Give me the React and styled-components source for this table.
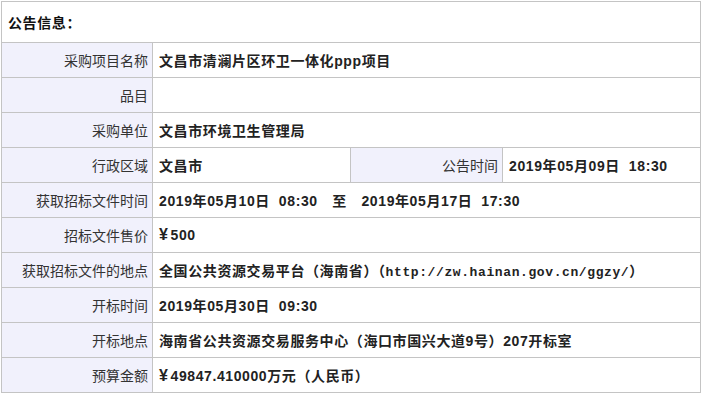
import React from 'react';
import styled, { createGlobalStyle } from 'styled-components';

const GlobalStyle = createGlobalStyle`
body {
    margin: 0;
    background: #fff;
    font-family: "Liberation Sans", "Noto Sans CJK SC", sans-serif;
    font-size: 14px;
    color: #333;
}
`

const Wrap = styled.div`
padding: 1px 0 0 1px;
`

const InfoTable = styled.table`
width: 700px;
border-collapse: collapse;
table-layout: fixed;
td, th {
    border: 1px solid #c4c4c4;
}
`

const TitleCell = styled.th`
height: 40px;
padding: 0 6px;
text-align: left;
font-weight: bold;
letter-spacing: 0.6px;
color: #111;
`

const Label = styled.td`
height: 34px;
padding: 0 4px 0 0;
text-align: right;
background: #f1f1fc;
color: #333;
white-space: nowrap;
`

const Value = styled.td`
height: 34px;
padding: 0 0 0 6px;
font-weight: bold;
letter-spacing: 0.6px;
color: #222;
white-space: pre;
`

const Mono = styled.span`
font-family: "Liberation Mono", "Noto Sans CJK SC", monospace;
font-size: 13px;
`

// half-width yen, a touch larger like the original bitmap glyph
const Yen = styled.span`
font-size: 16px;
line-height: 1;
margin-right: 2px;
`

const rows = [
    ['采购项目名称', '文昌市清澜片区环卫一体化ppp项目'],
    ['品目', ''],
    ['采购单位', '文昌市环境卫生管理局'],
]

const rowsAfter = [
    ['获取招标文件时间', '2019年05月10日  08:30\u3000至\u30002019年05月17日  17:30'],
    ['招标文件售价', <><Yen>¥</Yen>500</>],
    ['获取招标文件的地点', <>全国公共资源交易平台（海南省）（<Mono>http://zw.hainan.gov.cn/ggzy/</Mono>）</>],
    ['开标时间', '2019年05月30日  09:30'],
    ['开标地点', '海南省公共资源交易服务中心（海口市国兴大道9号）207开标室'],
    ['预算金额', <><Yen>¥</Yen>49847.410000万元（人民币）</>],
]

export default function App() {
    return <Wrap>
        <GlobalStyle />
        <InfoTable>
            <colgroup>
                <col style={{ width: 151 }} />
                <col style={{ width: 198 }} />
                <col style={{ width: 152 }} />
                <col style={{ width: 198 }} />
            </colgroup>
            <tbody>
                <tr><TitleCell colSpan={4}>公告信息：</TitleCell></tr>
                {rows.map(([k, v]) => <tr key={k}>
                    <Label>{k}</Label>
                    <Value colSpan={3}>{v}</Value>
                </tr>)}
                <tr>
                    <Label>行政区域</Label>
                    <Value>文昌市</Value>
                    <Label>公告时间</Label>
                    <Value>2019年05月09日  18:30</Value>
                </tr>
                {rowsAfter.map(([k, v]) => <tr key={k}>
                    <Label>{k}</Label>
                    <Value colSpan={3}>{v}</Value>
                </tr>)}
            </tbody>
        </InfoTable>
    </Wrap>
};
